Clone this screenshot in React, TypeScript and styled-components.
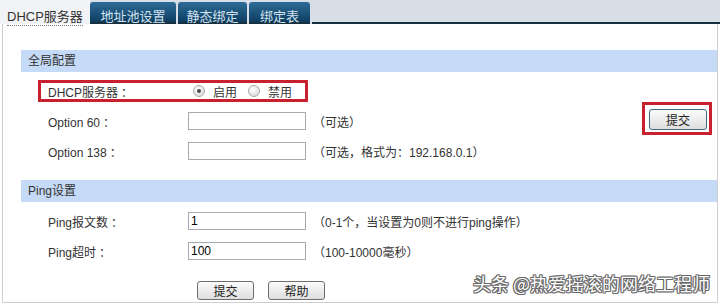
import React from 'react';
import styled, { createGlobalStyle } from 'styled-components';

const GlobalStyle = createGlobalStyle`
  html, body {
    margin: 0;
    padding: 0;
    background: #ffffff;
  }

  body {
    font-family: 'Liberation Sans', 'Noto Sans CJK SC', sans-serif;
    font-size: 12px;
    color: #333333;
  }
`;

const Page = styled.div`
  position: relative;
  width: 720px;
  height: 306px;
  overflow: hidden;
  background: #ffffff;
`;

const TabBar = styled.div`
  display: flex;
  align-items: flex-end;
  height: 24px;
  background: #d7dee8;
`;

const ActiveTab = styled.div`
  width: 90px;
  height: 24px;
  box-sizing: border-box;
  padding: 6px 0 0 7px;
  background: #f1f3f6;
  font-size: 13px;
  color: #333333;

  span {
    border-bottom: 1px dotted #777;
    padding-bottom: 1px;
  }
`;

const Tab = styled.div<{ $width: number }>`
  width: ${(p) => p.$width}px;
  height: 22px;
  margin-right: 2px;
  box-sizing: border-box;
  padding-top: 4px;
  border-bottom: 2px solid #16303f;
  border-radius: 3px 3px 0 0;
  background: linear-gradient(#2d6c98, #0e3d60);
  color: #d3e3f0;
  font-size: 13px;
  text-align: center;
`;

const TabFiller = styled.div`
  flex: 1;
  height: 22px;
  border-bottom: 2px solid #16303f;
`;

const Body = styled.div`
  height: 279px;
  margin: 0 2px;
  padding-top: 26px;
  box-sizing: border-box;
  border: 1px solid #cfcfcf;
  border-top: 0 none;
`;

const SectionHeader = styled.div<{ $gap?: number }>`
  height: 22px;
  line-height: 22px;
  margin-left: 18px;
  margin-top: ${(p) => p.$gap ?? 0}px;
  padding-left: 7px;
  background: #c5daf6;
  color: #333333;
`;

const Rows = styled.div`
  margin-left: 18px;
  padding-top: 4px;
`;

const Row = styled.div`
  display: flex;
  align-items: center;
  height: 30px;
  padding-left: 27px;
`;

const Label = styled.div`
  width: 140px;
  flex-shrink: 0;
`;

const Colon = styled.span`
  margin-left: 3px;
`;

const Input = styled.input`
  width: 118px;
  height: 18px;
  margin: 0;
  padding: 0 2px;
  box-sizing: border-box;
  border: 1px solid #a3aab2;
  font-family: 'Liberation Sans', 'Noto Sans CJK SC', sans-serif;
  font-size: 12px;
  color: #000;
  outline: none;
`;

const Hint = styled.div`
  margin-left: 7px;
  color: #333333;
`;

const Highlight = styled.div`
  display: flex;
  align-items: center;
  width: 270px;
  height: 22px;
  margin-left: -10px;
  padding-left: 7px;
  box-sizing: border-box;
  border: 3px solid #c9202f;
`;

const Radio = styled.span<{ $checked?: boolean }>`
  position: relative;
  width: 12px;
  height: 12px;
  margin-left: 5px;
  box-sizing: border-box;
  border: 1px solid #a9a9a9;
  border-radius: 50%;
  background: radial-gradient(circle at 40% 35%, #ffffff, #d4d4d4);

  &::after {
    content: '';
    display: ${(p) => (p.$checked ? 'block' : 'none')};
    position: absolute;
    left: 3px;
    top: 3px;
    width: 4px;
    height: 4px;
    border-radius: 50%;
    background: #4a4a4a;
  }
`;

const RadioText = styled.span`
  margin: 0 6px 0 8px;
`;

const SubmitMark = styled.div`
  align-self: flex-start;
  margin: -4px 5px 0 auto;
  width: 70px;
  height: 33px;
  padding: 4px 2px 2px 4px;
  box-sizing: border-box;
  border: 3px solid #c9202f;
`;

const Button = styled.button<{ $accent?: boolean; $width?: number }>`
  width: ${(p) => p.$width ?? 57}px;
  height: ${(p) => (p.$accent ? 21 : 19)}px;
  margin: 0;
  padding: 0;
  border: 1px solid ${(p) => (p.$accent ? '#3f6884' : '#6e6e6e')};
  border-radius: 3px;
  background: linear-gradient(#fbfbfb, #dedede);
  font-family: 'Liberation Sans', 'Noto Sans CJK SC', sans-serif;
  font-size: 12px;
  color: #222;
  cursor: pointer;
`;

const Actions = styled.div`
  display: flex;
  gap: 14px;
  margin-top: 15px;
  padding-left: 176px;
`;

const Watermark = styled.div`
  position: absolute;
  right: 10px;
  bottom: 10px;
  font-family: 'Noto Sans CJK SC', sans-serif;
  font-size: 18px;
  color: #ffffff;
  text-shadow: 1px 0 0 #666, -1px 0 0 #666, 0 1px 0 #666, 0 -1px 0 #666,
    1px 1px 0 #777, -1px -1px 0 #777, 1px -1px 0 #777, -1px 1px 0 #777;
`;

export default function App() {
  return (
    <>
      <GlobalStyle />
      <Page>
        <TabBar>
          <ActiveTab>
            <span>DHCP服务器</span>
          </ActiveTab>
          <Tab $width={86}>地址池设置</Tab>
          <Tab $width={69}>静态绑定</Tab>
          <Tab $width={61}>绑定表</Tab>
          <TabFiller />
        </TabBar>
        <Body>
          <SectionHeader>全局配置</SectionHeader>
          <Rows>
            <Row>
              <Highlight>
                <Label>
                  DHCP服务器<Colon>：</Colon>
                </Label>
                <Radio $checked />
                <RadioText>启用</RadioText>
                <Radio />
                <RadioText>禁用</RadioText>
              </Highlight>
            </Row>
            <Row>
              <Label>
                Option 60<Colon>：</Colon>
              </Label>
              <Input type="text" defaultValue="" />
              <Hint>（可选）</Hint>
              <SubmitMark>
                <Button $accent $width={58}>
                  提交
                </Button>
              </SubmitMark>
            </Row>
            <Row>
              <Label>
                Option 138<Colon>：</Colon>
              </Label>
              <Input type="text" defaultValue="" />
              <Hint>（可选，格式为：192.168.0.1）</Hint>
            </Row>
          </Rows>
          <SectionHeader $gap={14}>Ping设置</SectionHeader>
          <Rows>
            <Row>
              <Label>
                Ping报文数<Colon>：</Colon>
              </Label>
              <Input type="text" defaultValue="1" />
              <Hint>（0-1个，当设置为0则不进行ping操作）</Hint>
            </Row>
            <Row>
              <Label>
                Ping超时<Colon>：</Colon>
              </Label>
              <Input type="text" defaultValue="100" />
              <Hint>（100-10000毫秒）</Hint>
            </Row>
            <Actions>
              <Button>提交</Button>
              <Button>帮助</Button>
            </Actions>
          </Rows>
        </Body>
        <Watermark>头条 @热爱摇滚的网络工程师</Watermark>
      </Page>
    </>
  );
}
